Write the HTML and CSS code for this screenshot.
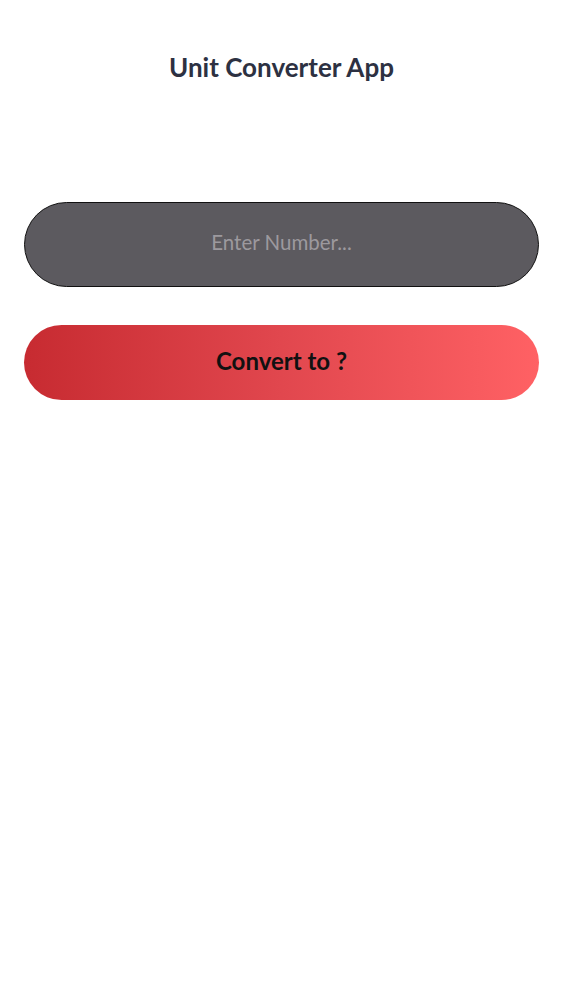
FILE: index.html
```html
<!DOCTYPE html>
<html lang="en">
<head>
    <meta charset="UTF-8">
    <meta name="viewport" content="width=device-width, initial-scale=1.0">
    <title>Unit Converter App</title>
    <link rel="stylesheet" href="styles.css">
</head>
<body>

    <div class="app">
        <h1 class="title">Unit Converter App</h1>

        <input class="number-input" type="text" placeholder="Enter Number...">

        <button class="convert-btn">Convert to ?</button>
    </div>

</body>
</html>
```

FILE: styles.css
```css
body {
    font-family: 'Lato', 'Noto Sans', sans-serif;
    margin: 0;
    padding: 0;
    background-color: #fff;
}

.app {
    display: flex;
    flex-direction: column;
    padding: 0 24px;
}

.title {
    margin: 50px 0 0;
    text-align: center;
    font-size: 26px;
    font-weight: 700;
    color: #2d3142;
    line-height: 34px;
}

.number-input {
    margin-top: 118px;
    height: 85px;
    box-sizing: border-box;
    padding: 0 0 5px;
    border: 1.5px solid #111;
    border-radius: 43px;
    background-color: #5c5a5f;
    color: #ddd;
    font-family: inherit;
    font-size: 20.5px;
    text-align: center;
    outline: none;
}

.number-input::placeholder {
    color: #9c999e;
}

.convert-btn {
    margin-top: 38px;
    height: 75px;
    padding: 0 0 5px;
    border: none;
    border-radius: 38px;
    background: linear-gradient(to right, #c72b31, #e1474e 50%, #ff6164);
    color: #111;
    font-family: inherit;
    font-size: 24px;
    font-weight: 700;
    cursor: pointer;
}
```
